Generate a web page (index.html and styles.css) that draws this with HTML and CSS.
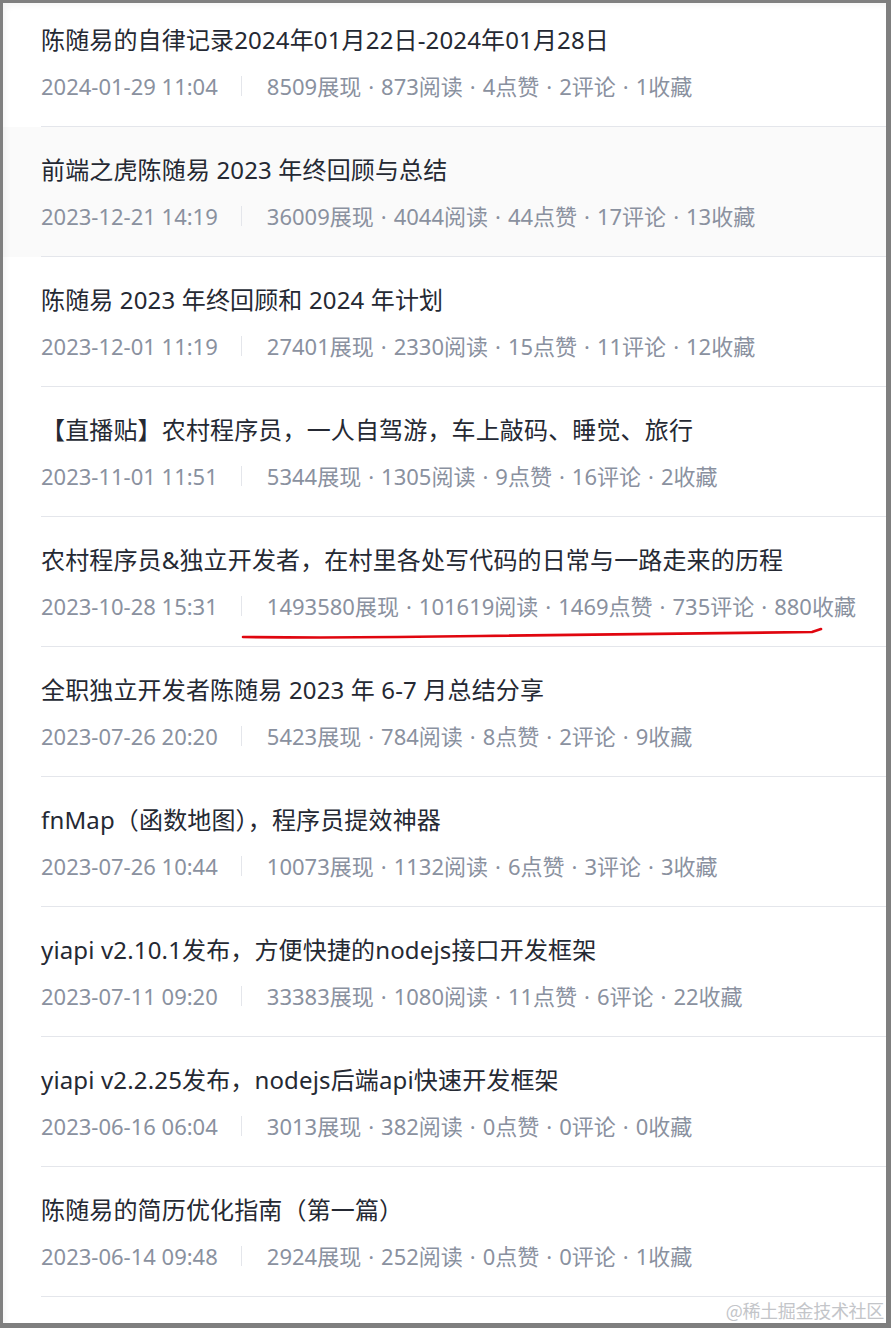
FILE: index.html
```html
<!DOCTYPE html>
<html lang="zh-CN">
<head>
<meta charset="utf-8">
<title>文章列表</title>
<link rel="stylesheet" href="styles.css">
</head>
<body>
<div class="frame">
  <div class="list">
    <div class="item">
      <div class="item-inner">
        <div class="title">陈随易的自律记录2024年01月22日-2024年01月28日</div>
        <div class="meta"><span class="date">2024-01-29 11:04</span><span class="divider"></span><span class="stats">8509展现<span class="dot">·</span>873阅读<span class="dot">·</span>4点赞<span class="dot">·</span>2评论<span class="dot">·</span>1收藏</span></div>
      </div>
    </div>
    <div class="item hover">
      <div class="item-inner">
        <div class="title">前端之虎陈随易 2023 年终回顾与总结</div>
        <div class="meta"><span class="date">2023-12-21 14:19</span><span class="divider"></span><span class="stats">36009展现<span class="dot">·</span>4044阅读<span class="dot">·</span>44点赞<span class="dot">·</span>17评论<span class="dot">·</span>13收藏</span></div>
      </div>
    </div>
    <div class="item">
      <div class="item-inner">
        <div class="title">陈随易 2023 年终回顾和 2024 年计划</div>
        <div class="meta"><span class="date">2023-12-01 11:19</span><span class="divider"></span><span class="stats">27401展现<span class="dot">·</span>2330阅读<span class="dot">·</span>15点赞<span class="dot">·</span>11评论<span class="dot">·</span>12收藏</span></div>
      </div>
    </div>
    <div class="item">
      <div class="item-inner">
        <div class="title">【直播贴】农村程序员，一人自驾游，车上敲码、睡觉、旅行</div>
        <div class="meta"><span class="date">2023-11-01 11:51</span><span class="divider"></span><span class="stats">5344展现<span class="dot">·</span>1305阅读<span class="dot">·</span>9点赞<span class="dot">·</span>16评论<span class="dot">·</span>2收藏</span></div>
      </div>
    </div>
    <div class="item">
      <div class="item-inner">
        <div class="title">农村程序员&amp;独立开发者，在村里各处写代码的日常与一路走来的历程</div>
        <div class="meta"><span class="date">2023-10-28 15:31</span><span class="divider"></span><span class="stats">1493580展现<span class="dot">·</span>101619阅读<span class="dot">·</span>1469点赞<span class="dot">·</span>735评论<span class="dot">·</span>880收藏</span></div>
      </div>
    </div>
    <div class="item">
      <div class="item-inner">
        <div class="title">全职独立开发者陈随易 2023 年 6-7 月总结分享</div>
        <div class="meta"><span class="date">2023-07-26 20:20</span><span class="divider"></span><span class="stats">5423展现<span class="dot">·</span>784阅读<span class="dot">·</span>8点赞<span class="dot">·</span>2评论<span class="dot">·</span>9收藏</span></div>
      </div>
    </div>
    <div class="item">
      <div class="item-inner">
        <div class="title">fnMap（函数地图），程序员提效神器</div>
        <div class="meta"><span class="date">2023-07-26 10:44</span><span class="divider"></span><span class="stats">10073展现<span class="dot">·</span>1132阅读<span class="dot">·</span>6点赞<span class="dot">·</span>3评论<span class="dot">·</span>3收藏</span></div>
      </div>
    </div>
    <div class="item">
      <div class="item-inner">
        <div class="title">yiapi v2.10.1发布，方便快捷的nodejs接口开发框架</div>
        <div class="meta"><span class="date">2023-07-11 09:20</span><span class="divider"></span><span class="stats">33383展现<span class="dot">·</span>1080阅读<span class="dot">·</span>11点赞<span class="dot">·</span>6评论<span class="dot">·</span>22收藏</span></div>
      </div>
    </div>
    <div class="item">
      <div class="item-inner">
        <div class="title">yiapi v2.2.25发布，nodejs后端api快速开发框架</div>
        <div class="meta"><span class="date">2023-06-16 06:04</span><span class="divider"></span><span class="stats">3013展现<span class="dot">·</span>382阅读<span class="dot">·</span>0点赞<span class="dot">·</span>0评论<span class="dot">·</span>0收藏</span></div>
      </div>
    </div>
    <div class="item">
      <div class="item-inner">
        <div class="title">陈随易的简历优化指南（第一篇）</div>
        <div class="meta"><span class="date">2023-06-14 09:48</span><span class="divider"></span><span class="stats">2924展现<span class="dot">·</span>252阅读<span class="dot">·</span>0点赞<span class="dot">·</span>0评论<span class="dot">·</span>1收藏</span></div>
      </div>
    </div>
  </div>
  <svg class="scribble" width="891" height="1328" viewBox="0 0 891 1328">
    <path d="M243 637 C 330 638, 420 637, 480 636 C 600 634, 720 633, 812 632 L 821 629" fill="none" stroke="#e0060f" stroke-width="2.6" stroke-linecap="round" stroke-linejoin="round"/>
  </svg>
  <div class="watermark">@稀土掘金技术社区</div>
</div>
</body>
</html>
```

FILE: styles.css
```css
html, body {
  margin: 0;
  padding: 0;
  background: #808080;
}

.frame {
  position: relative;
  width: 891px;
  height: 1328px;
  box-sizing: border-box;
  border-style: solid;
  border-color: #7f7f7f;
  border-width: 3px 5px 5px 3px;
  background: #ffffff;
  overflow: hidden;
  font-family: "Noto Sans", "Noto Sans CJK SC", sans-serif;
}

.frame::before {
  content: "";
  position: absolute;
  inset: 0;
  box-shadow: inset 7px 7px 6px -4px rgba(0, 0, 0, 0.045);
  pointer-events: none;
  z-index: 2;
}

.list {
  margin-top: -6px;
}

.item {
  padding-left: 38px;
}

.item.hover {
  background: #fafafa;
}

.item-inner {
  display: flex;
  flex-direction: column;
  gap: 14px;
  padding: 26px 0 25px 0;
  border-bottom: 1px solid #e4e6eb;
}

.title {
  font-size: 24px;
  line-height: 34px;
  color: #252933;
  white-space: nowrap;
  letter-spacing: 0.15px;
}

.meta {
  display: flex;
  align-items: center;
  font-size: 22px;
  line-height: 30px;
  color: #8a919f;
  white-space: nowrap;
}

.divider {
  width: 1px;
  height: 20px;
  background: #e4e6eb;
  margin: 0 25px 0 23px;
}

.dot {
  margin: 0 7px;
}

.scribble {
  position: absolute;
  left: -3px;
  top: -3px;
  pointer-events: none;
}

.watermark {
  position: absolute;
  right: 2px;
  bottom: 2px;
  font-family: "Noto Sans CJK SC", sans-serif;
  font-size: 18px;
  line-height: 22px;
  color: #c3c5c9;
  letter-spacing: -0.3px;
}
```
